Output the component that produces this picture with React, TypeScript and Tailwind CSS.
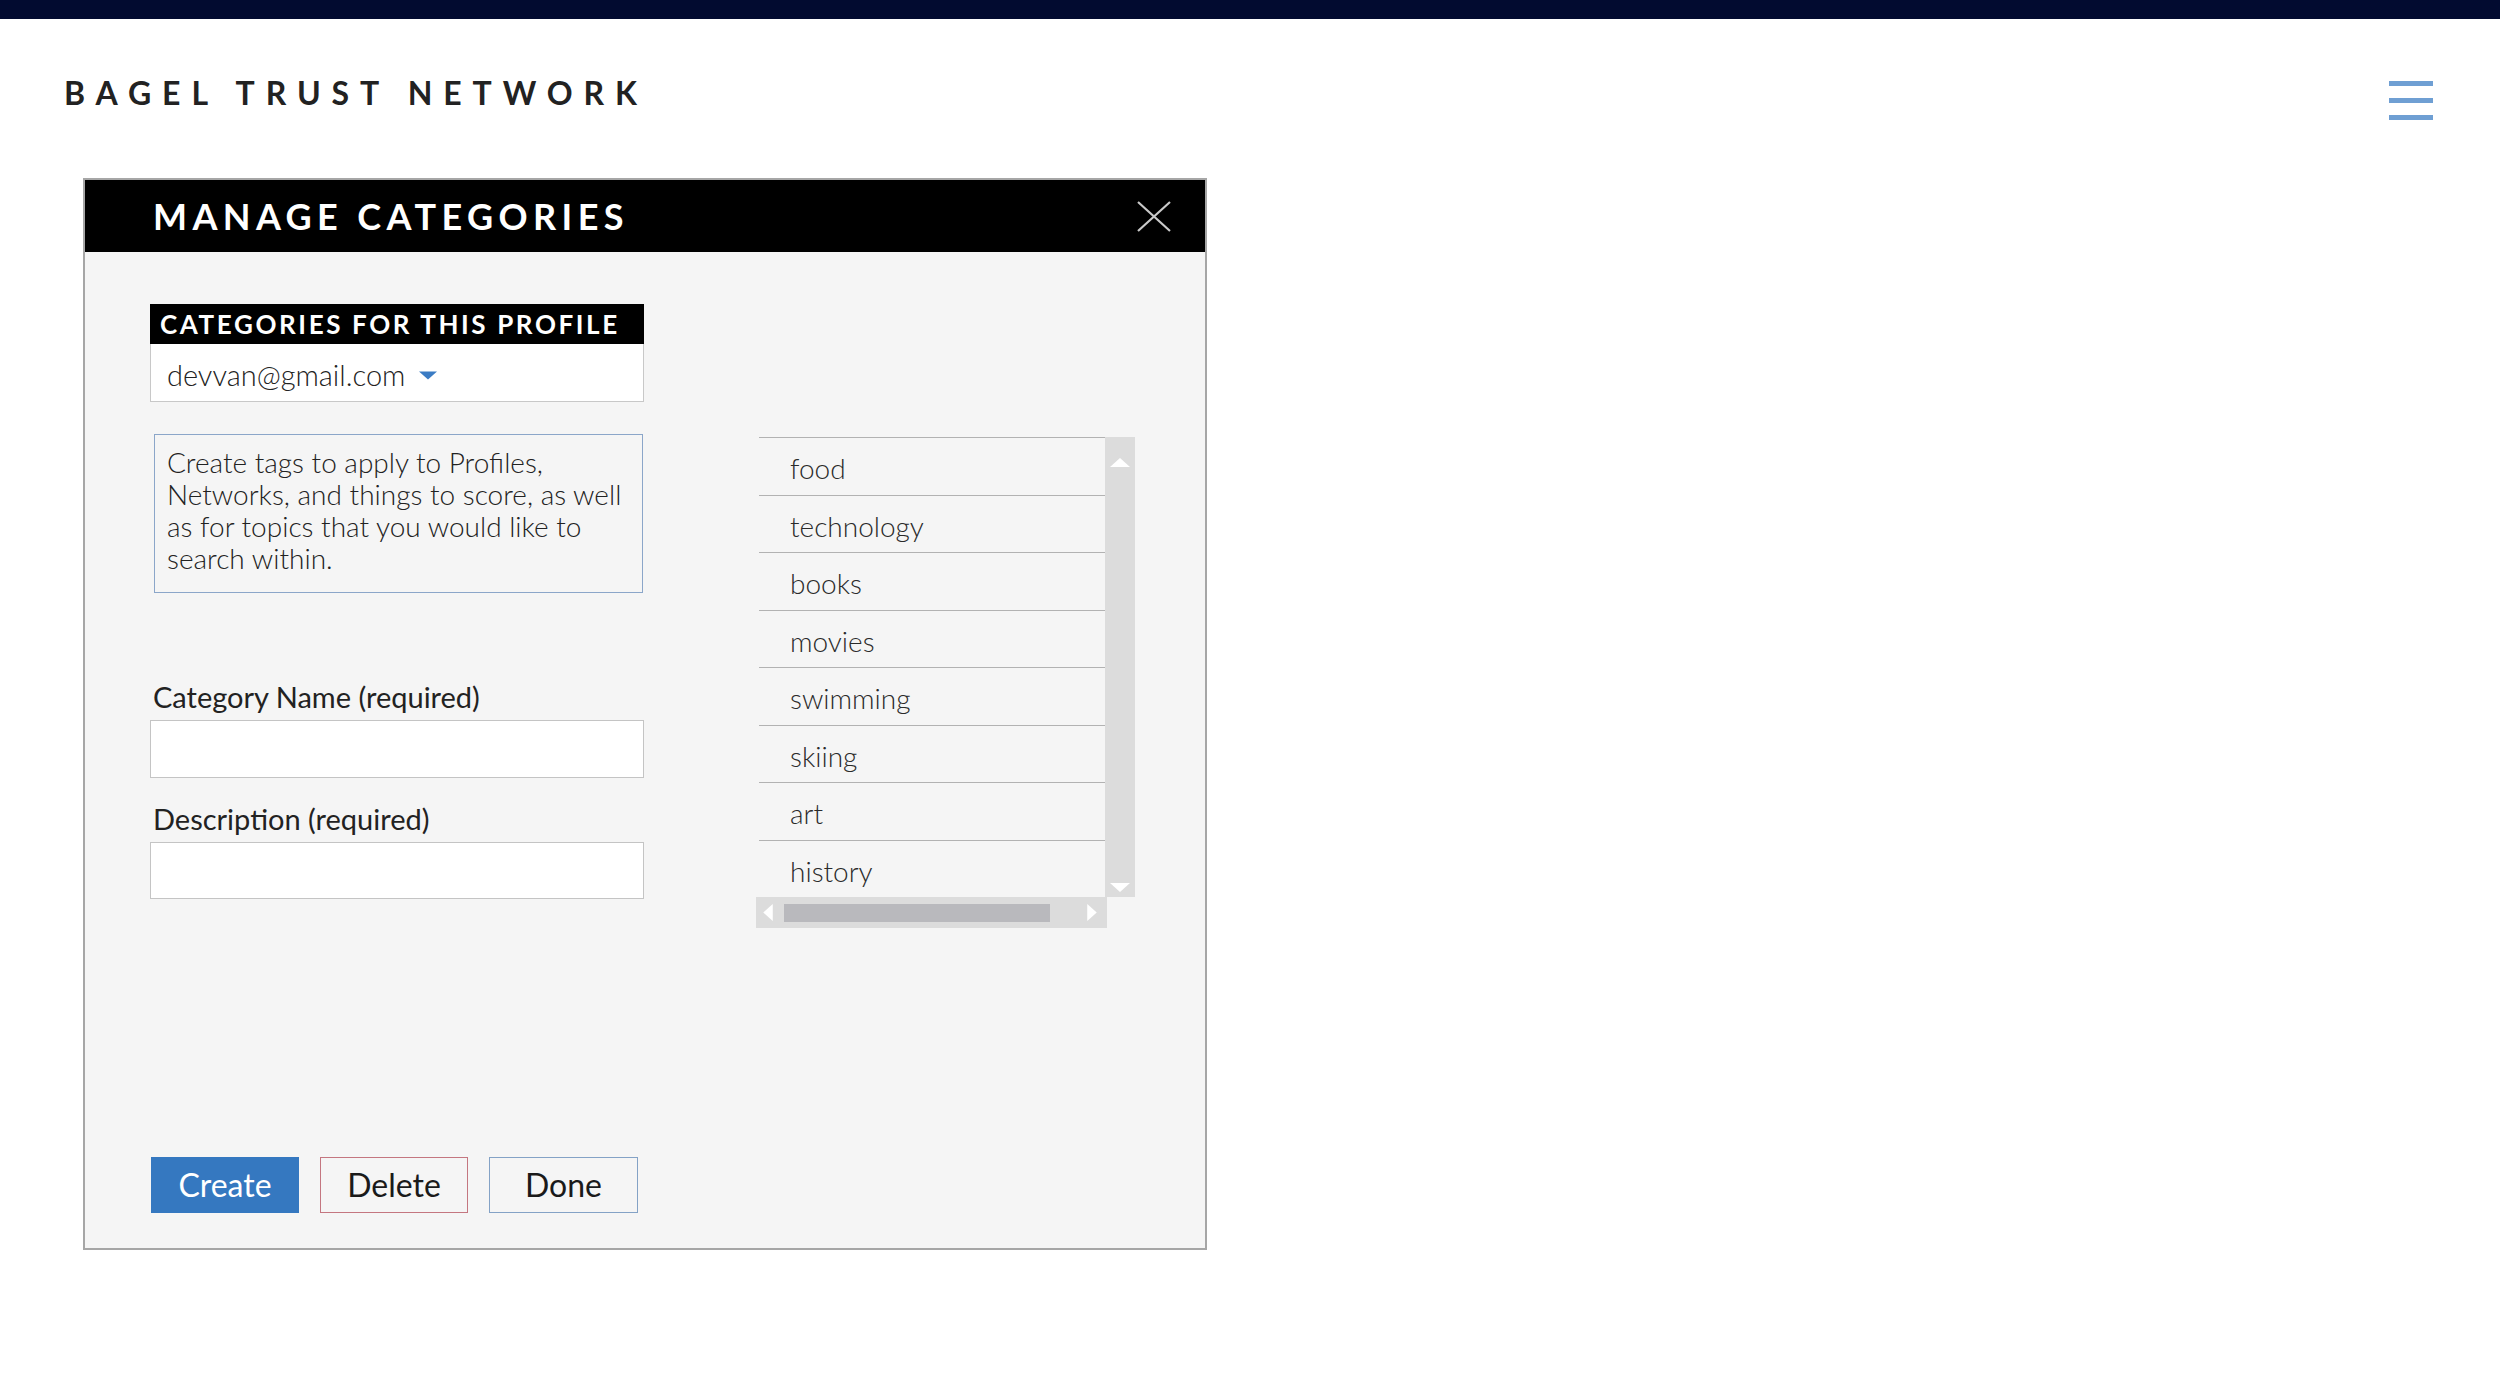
import React from 'react';

const categories = ['food', 'technology', 'books', 'movies', 'swimming', 'skiing', 'art', 'history'];

const Triangle: React.FC<{ dir: 'up' | 'down' | 'left' | 'right'; className?: string }> = ({ dir, className = '' }) => {
  const points = {
    up: '0,9 10,0 20,9',
    down: '0,0 20,0 10,9',
    left: '10,0 10,18 0,9',
    right: '0,0 0,18 10,9',
  }[dir];
  const vb = dir === 'up' || dir === 'down' ? '0 0 20 9' : '0 0 10 18';
  return (
    <svg viewBox={vb} className={className}>
      <polygon points={points} fill="currentColor" />
    </svg>
  );
};

const CategoryList: React.FC = () => (
  <div className="flex w-[379px] flex-col">
    <div className="flex h-[460px]">
      <div className="flex w-[349px] flex-col overflow-hidden bg-[#f5f5f5] pl-[3px]">
        {categories.map(c => (
          <div
            key={c}
            className="h-[57.5px] shrink-0 border-t border-[#b2b2b2] pl-[31px] pt-[16px] text-[28px] leading-[29px] font-light text-[#2a2a2a]"
          >
            {c}
          </div>
        ))}
      </div>
      <div className="flex w-[30px] flex-col items-center justify-between bg-[#dcdcdc] pt-[21px] pb-[5px]">
        <Triangle dir="up" className="h-[9px] w-[20px] text-white" />
        <Triangle dir="down" className="h-[9px] w-[20px] text-white" />
      </div>
    </div>
    <div className="flex h-[31px] w-[351px] items-center bg-[#dcdcdc] pl-[7px] pr-[10px]">
      <Triangle dir="left" className="h-[17px] w-[10px] text-white" />
      <div className="ml-[11px] h-[18px] w-[266px] bg-[#b9b9bd]" />
      <div className="flex-1" />
      <Triangle dir="right" className="h-[17px] w-[10px] text-white" />
    </div>
  </div>
);

export default function App() {
  return (
    <div className="min-h-screen bg-white font-['Lato','Liberation_Sans',sans-serif]">
      <div className="h-[19px] bg-[#020b30]" />

      <header className="flex h-[159px] items-start justify-between pl-[64px] pr-[67px]">
        <h1 className="mt-[58px] text-[32px] leading-[32px] font-bold tracking-[0.34em] text-[#222]">
          BAGEL TRUST NETWORK
        </h1>
        <button className="mt-[62px] flex w-[44px] flex-col gap-[12px]" aria-label="Menu">
          <span className="h-[5px] bg-[#6f9fd3]" />
          <span className="h-[5px] bg-[#6f9fd3]" />
          <span className="h-[5px] bg-[#6f9fd3]" />
        </button>
      </header>

      <div className="ml-[83px] flex h-[1072px] w-[1124px] flex-col border-2 border-[#a6a6a6] bg-[#f5f5f5]">
        <div className="flex h-[72px] shrink-0 items-center justify-between bg-black pl-[68px] pr-[34px]">
          <h2 className="text-[36px] leading-none font-bold tracking-[0.15em] text-white">MANAGE CATEGORIES</h2>
          <svg viewBox="0 0 34 31" className="h-[31px] w-[34px]">
            <path d="M1 1 L33 30 M33 1 L1 30" stroke="#c9c9c9" strokeWidth="2.2" fill="none" />
          </svg>
        </div>

        <div className="flex flex-1 pl-[65px] pt-[52px] pb-[35px]">
          <div className="flex w-[494px] flex-col">
            <div className="flex h-[40px] items-center bg-black pl-[10px] text-[26px] font-bold tracking-[0.1em] text-white">
              CATEGORIES FOR THIS PROFILE
            </div>
            <div className="flex h-[58px] items-center border border-t-0 border-[#c8c8c8] bg-white pl-[16px] pt-[5px] text-[29px] font-light text-[#222]">
              devvan@gmail.com
              <Triangle dir="down" className="ml-[14px] h-[9px] w-[18px] text-[#3b7cc4]" />
            </div>

            <div className="mt-[32px] ml-[4px] h-[159px] w-[489px] border border-[#8ba6c9] px-[12px] pt-[11px] text-[28px] leading-[32px] font-light whitespace-nowrap text-[#222]">
              <div>Create tags to apply to Profiles,</div>
              <div>Networks, and things to score, as well</div>
              <div>as for topics that you would like to</div>
              <div>search within.</div>
            </div>

            <label className="mt-[87px] pl-[3px] text-[29px] leading-[34px] text-[#222]">Category Name (required)</label>
            <input className="mt-[6px] h-[58px] border border-[#c4c4c4] bg-white outline-none" />

            <label className="mt-[24px] pl-[3px] text-[29px] leading-[34px] text-[#222]">Description (required)</label>
            <input className="mt-[6px] h-[57px] border border-[#c4c4c4] bg-white outline-none" />

            <div className="mt-auto flex gap-[21px] pl-[1px]">
              <button className="h-[56px] w-[148px] bg-[#3578c0] text-[32px] text-white">Create</button>
              <button className="h-[56px] w-[148px] border border-[#c47680] text-[32px] text-[#1a1a1a]">Delete</button>
              <button className="h-[56px] w-[149px] border border-[#84a2c6] text-[32px] text-[#1a1a1a]">Done</button>
            </div>
          </div>

          <div className="ml-[112px] pt-[133px]">
            <CategoryList />
          </div>
        </div>
      </div>
    </div>
  );
}
